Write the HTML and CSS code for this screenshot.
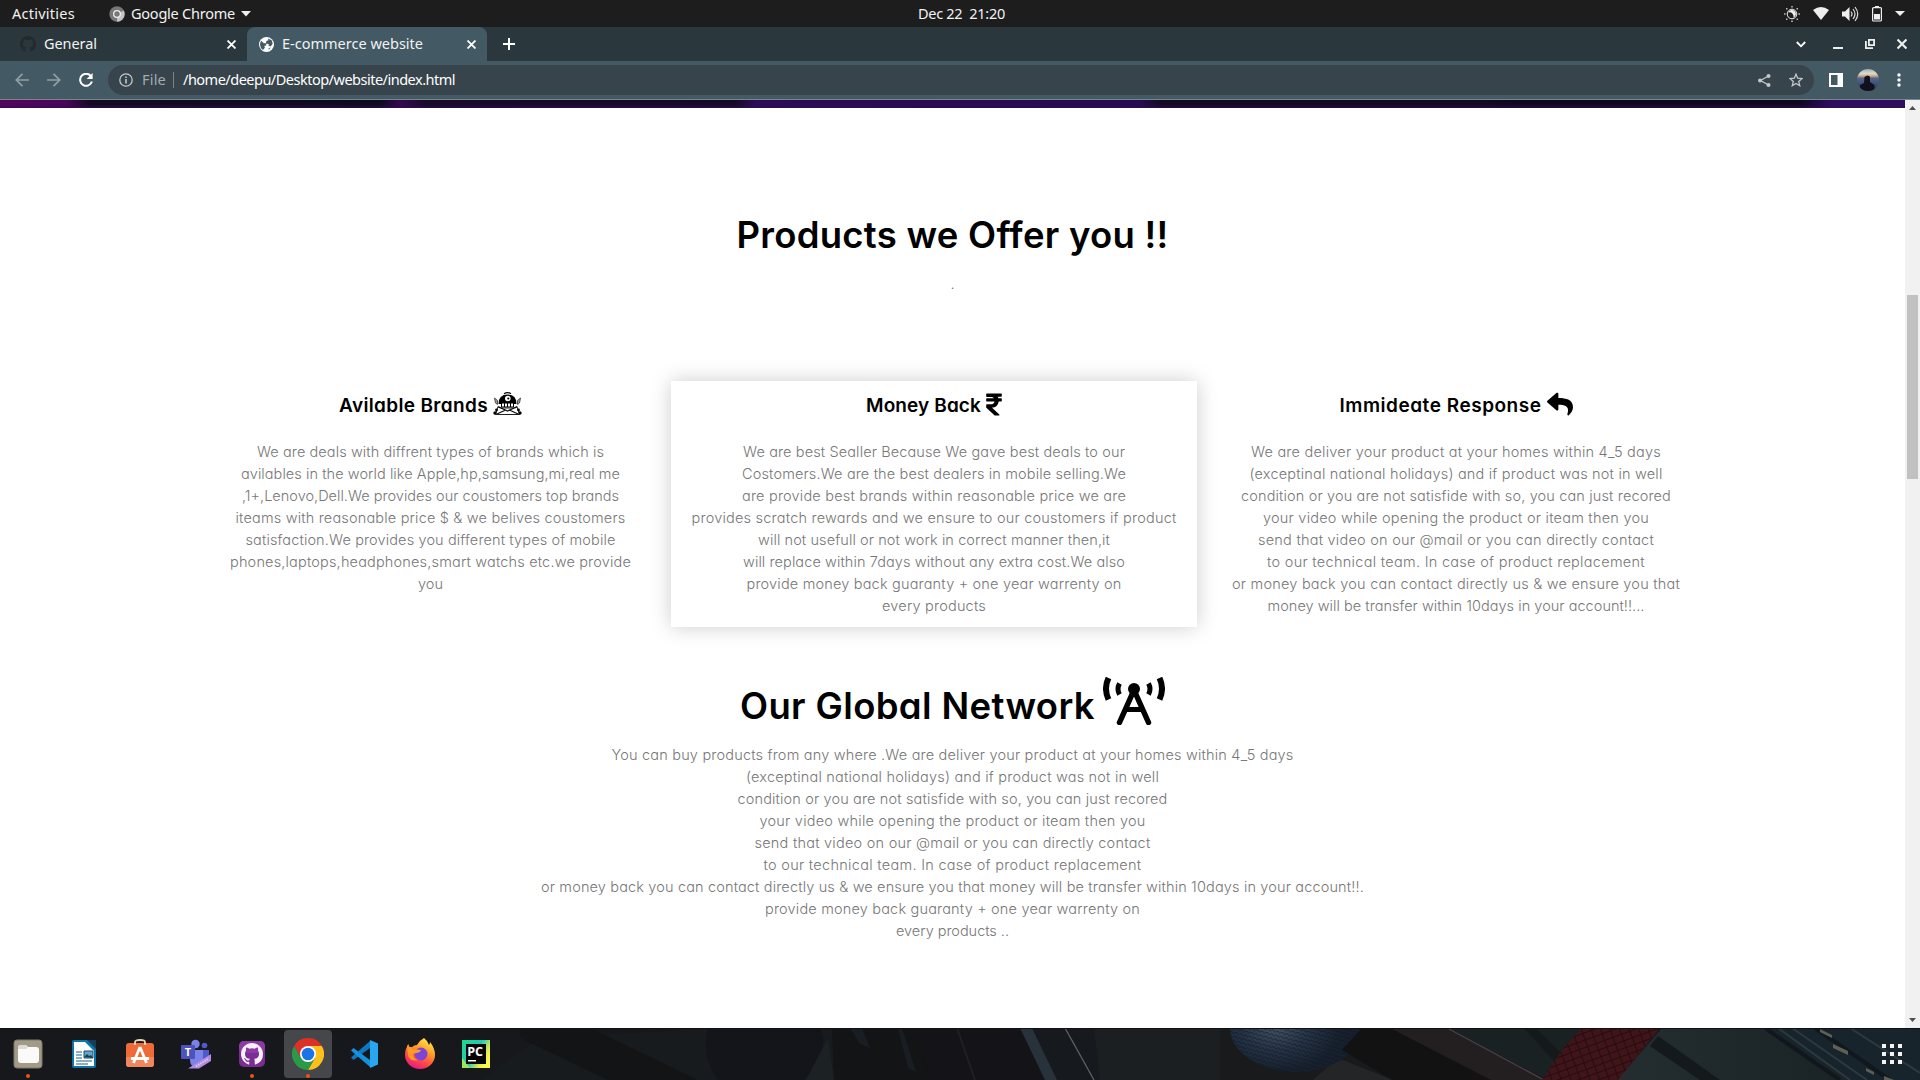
FILE: index.html
```html
<!DOCTYPE html>
<html lang="en">
<head>
<meta charset="utf-8">
<title>E-commerce website</title>
<link rel="stylesheet" href="styles.css">
</head>
<body>
<header class="topbar">
  <span class="activities fit" data-width="63">Activities</span>
  <span class="app-menu">
    <svg width="16" height="16" viewBox="0 0 16 16"><circle cx="8" cy="8" r="7.700" fill="#777"/><path d="M8 8L14.800 4.500A7.700 7.700 0 0 1 8 15.700z" fill="#c4c4c4"/><circle cx="8" cy="8" r="4" fill="#eee"/><circle cx="8" cy="8" r="2.700" fill="#777"/></svg>
    <span class="app-name fit" data-width="104">Google Chrome</span>
    <svg width="10" height="6" viewBox="0 0 10 6"><path d="M0 0h10L5 5.500z" fill="#eee"/></svg>
  </span>
  <span class="clock fit" data-width="87">Dec 22&nbsp; 21:20</span>
  <span class="tray">
    <svg width="16" height="16" viewBox="0 0 16 16" fill="#eee"><circle cx="8" cy="8" r="4.800" fill="none" stroke="#eee"/><path d="M7 4.200a4 4 0 1 0 4.800 5.200A3.800 3.800 0 0 1 7 4.200z" transform="rotate(180 8 8)"/><path d="M7.200 0h1.600v1.600H7.200zM7.200 14.400h1.600V16H7.200zM0 7.200h1.600v1.600H0zM14.400 7.200H16v1.600h-1.600zM2 2h1.500v1.500H2zM12.500 2H14v1.500h-1.500zM2 12.500h1.500V14H2zM12.500 12.500H14V14h-1.500z" opacity=".75"/></svg>
    <svg width="16" height="13" viewBox="0 0 16 13"><path d="M0 3Q8-2.800 16 3L8 13z" fill="#eee"/></svg>
    <svg width="17" height="16" viewBox="0 0 17 16"><path d="M0 5.500h3L7.500 1v14L3 10.500H0z" fill="#eee"/><path d="M9 5.500q2 2.500 0 5M11 3q4 5 0 10M13 1q5.500 7 0 14" fill="none" stroke="#ddd" stroke-width="1.200"/></svg>
    <svg width="10" height="16" viewBox="0 0 10 16"><path d="M3 0h4v1.500H3z" fill="#eee"/><rect x=".6" y="1.600" width="8.800" height="13.400" rx="1" fill="none" stroke="#eee" stroke-width="1.200"/><path d="M2 8h6v5.500H2z" fill="#eee"/></svg>
    <svg width="10" height="5" viewBox="0 0 10 5"><path d="M0 0h10L5 5z" fill="#eee"/></svg>
  </span>
</header>

<nav class="tabs">
  <div class="tab">
    <svg class="tab-icon" width="16" height="16" viewBox="0 0 16 16"><path fill="#24292e" d="M8 0C3.580 0 0 3.580 0 8c0 3.540 2.290 6.530 5.470 7.590.4.070.55-.17.55-.38 0-.19-.01-.82-.01-1.490-2.010.37-2.530-.49-2.690-.94-.09-.23-.48-.94-.82-1.130-.28-.15-.68-.52-.01-.53.63-.01 1.080.58 1.230.82.72 1.210 1.870.87 2.330.66.070-.52.28-.87.51-1.070-1.780-.2-3.640-.89-3.640-3.950 0-.87.31-1.590.82-2.150-.08-.2-.36-1.020.08-2.120 0 0 .67-.21 2.200.82a7.600 7.600 0 0 1 4 0c1.530-1.040 2.200-.82 2.200-.82.44 1.100.16 1.920.08 2.120.51.56.82 1.270.82 2.150 0 3.070-1.870 3.750-3.650 3.950.29.25.54.73.54 1.480 0 1.070-.01 1.930-.01 2.200 0 .21.15.46.55.38A8 8 0 0 0 16 8c0-4.420-3.580-8-8-8z"/></svg>
    <span class="tab-title fit" data-width="53">General</span>
    <svg class="close" width="9" height="9" viewBox="0 0 8 8"><path d="M.5.500l7 7M7.500.500l-7 7" stroke="#fff" stroke-width="1.600"/></svg>
  </div>
  <div class="tab active">
    <svg class="tab-icon" width="15" height="15" viewBox="0 0 14 14"><circle cx="7" cy="7" r="7" fill="#fff"/><path d="M2 3.500l2.500 2.300h2.300v2L5 8.300l.5 1.700-1.800 2.200A7 7 0 0 1 2 3.500zM8.500 1.300l3.300 1.800 1 3-1.800 2.800-2-.8V6.500L6.500 6l.3-2.200L8.800 3zM9 10.500l2-.8-2 2.500z" fill="#435963"/></svg>
    <span class="tab-title fit" data-width="141">E-commerce website</span>
    <svg class="close" width="9" height="9" viewBox="0 0 8 8"><path d="M.5.500l7 7M7.500.500l-7 7" stroke="#fff" stroke-width="1.600"/></svg>
  </div>
  <svg class="new-tab" width="12" height="12" viewBox="0 0 12 12"><path d="M6 0v12M0 6h12" stroke="#fff" stroke-width="2"/></svg>
  <div class="window-buttons">
    <svg width="10" height="7" viewBox="0 0 10 7"><path d="M.8 1L5 5.300 9.200 1" fill="none" stroke="#fff" stroke-width="1.800"/></svg>
    <svg class="minimise" width="10" height="10" viewBox="0 0 10 10"><path d="M0 8h10v2H0z" fill="#eee"/></svg>
    <svg width="10" height="10" viewBox="0 0 10 10"><path d="M3.900.900h5.200v5.200H3.900zM.9 2v7.100H8" fill="none" stroke="#eee" stroke-width="1.800"/></svg>
    <svg width="10" height="10" viewBox="0 0 10 10"><path d="M.5.500l9 9M9.500.500l-9 9" stroke="#eee" stroke-width="2.200"/></svg>
  </div>
</nav>

<div class="toolbar">
  <svg width="14" height="14" viewBox="0 0 14 14"><path d="M14 7H1.500M7.500.800L1.300 7l6.200 6.200" fill="none" stroke="#92a0a6" stroke-width="1.700"/></svg>
  <svg width="14" height="14" viewBox="0 0 14 14"><path d="M0 7h12.500M6.500.800L12.700 7l-6.200 6.200" fill="none" stroke="#92a0a6" stroke-width="1.700"/></svg>
  <svg width="14" height="14" viewBox="0 0 14 14"><path d="M11.800 3A6 6 0 1 0 12.900 8.500" fill="none" stroke="#fff" stroke-width="2"/><path d="M13.600 0v6H7.600z" fill="#fff"/></svg>
  <div class="address">
    <svg width="14" height="14" viewBox="0 0 14 14"><circle cx="7" cy="7" r="6.200" fill="none" stroke="#c3c9cc" stroke-width="1.300"/><path d="M6.200 6h1.600v4.500H6.200zM6.200 3.500h1.600V5H6.200z" fill="#c3c9cc"/></svg>
    <span class="scheme fit" data-width="24">File</span>
    <span class="divider"></span>
    <span class="path fit" data-width="272">/home/deepu/Desktop/website/index.html</span>
    <svg class="share" width="13" height="13" viewBox="0 0 13 13"><path d="M10.500 2L2.500 6.500l8 4.500" fill="none" stroke="#c3c7ca" stroke-width="1.300"/><circle cx="10.500" cy="2" r="2" fill="#c3c7ca"/><circle cx="2" cy="6.500" r="2" fill="#c3c7ca"/><circle cx="10.500" cy="11" r="2" fill="#c3c7ca"/></svg>
    <svg width="14" height="14" viewBox="0 0 14 14"><path d="M7 1.200l1.700 4 4.300.4-3.300 2.900 1 4.200L7 10.500l-3.700 2.200 1-4.200L1 5.600l4.300-.4z" fill="none" stroke="#c3c7ca" stroke-width="1.300"/></svg>
  </div>
  <svg class="panel" width="14" height="14" viewBox="0 0 14 14"><path d="M0 0h14v14H0zM2 2v10h6.500V2z" fill="#fff" fill-rule="evenodd"/></svg>
  <svg class="avatar" width="22" height="22" viewBox="0 0 22 22"><defs><clipPath id="av"><circle cx="11" cy="11" r="11"/></clipPath><linearGradient id="sky" x2="0" y2="1"><stop stop-color="#9dacb9"/><stop offset=".2" stop-color="#dcdccb"/><stop offset=".3" stop-color="#d5b48c"/><stop offset=".42" stop-color="#54658a"/><stop offset="1" stop-color="#26345c"/></linearGradient></defs><g clip-path="url(#av)"><path d="M0 0h22v22H0z" fill="url(#sky)"/><path d="M7.500 8q3.500-3 5.500 0v5l4.500 3v6H3v-6l4-2z" fill="#12101e"/></g></svg>
  <svg width="4" height="14" viewBox="0 0 4 14" fill="#fff"><circle cx="2" cy="2" r="1.700"/><circle cx="2" cy="7" r="1.700"/><circle cx="2" cy="12" r="1.700"/></svg>
</div>

<div class="viewport">
  <main class="page">
    <div class="hero-edge"></div>
    <section class="offer">
      <h1><span class="fit" data-width="432">Products we Offer you !!</span></h1>
      <p class="lead">.</p>
      <div class="cards">
        <article class="card brands">
          <h3><span class="fit" data-width="149">Avilable Brands</span>
            <svg class="pirate" width="29" height="24" viewBox="0 0 29 24"><path d="M5.500 12Q5.500 2.500 14.500 2.500T23.500 12z"/><path d="M11 1.700q3.500-2 7 0" fill="none" stroke="#000" stroke-width="1.200"/><circle cx="14.800" cy="6.500" r="2.800" fill="#fff"/><circle cx="15.300" cy="6.500" r="1.100"/><path d="M8.500 11h12v4h-12z" fill="#fff" stroke="#000"/><path d="M11.500 11v4M14.500 11v4M17.500 11v4" stroke="#000"/><path d="M5 14.500l4 1.500h11l4-1.500 2.500 8h-24z" fill="#fff" stroke="#222"/><path d="M4 22l8.500-4L5 15M25 22l-8.500-4L24 15M9 16.500l5.500 2.500 5.500-2.500" fill="none" stroke="#111" stroke-width="1.200"/><path d="M1.500 6l3 2.500v4L2.500 11zM27.500 6l-3 2.500v4L26.500 11z" fill="#999" stroke="#555"/><circle cx="2" cy="21" r="1.700"/><circle cx="27" cy="21" r="1.700"/><circle cx="3.500" cy="18" r="1.400"/><circle cx="25.500" cy="18" r="1.400"/></svg>
          </h3>
          <p>
            <span class="fit" data-width="347">We are deals with diffrent types of brands which is</span>
            <span class="fit" data-width="379">avilables in the world like Apple,hp,samsung,mi,real me</span>
            <span class="fit" data-width="377">,1+,Lenovo,Dell.We provides our coustomers top brands</span>
            <span class="fit" data-width="390">iteams with reasonable price $ &amp; we belives coustomers</span>
            <span class="fit" data-width="370">satisfaction.We provides you different types of mobile</span>
            <span class="fit" data-width="401">phones,laptops,headphones,smart watchs etc.we provide</span>
            <span class="fit" data-width="25">you</span>
          </p>
        </article>
        <article class="card money">
          <h3><span class="fit" data-width="115">Money Back</span>
            <svg class="rupee" width="16" height="25" viewBox="0 0 320 512"><path d="M308 96c6.627 0 12-5.373 12-12V44c0-6.627-5.373-12-12-12H12C5.373 32 0 37.373 0 44v44.748c0 6.627 5.373 12 12 12h85.280c27.308 0 48.261 9.958 60.970 27.252H12c-6.627 0-12 5.373-12 12v40c0 6.627 5.373 12 12 12h158.757c-6.217 36.086-32.294 58.632-74.757 58.632H12c-6.627 0-12 5.373-12 12v53.012c0 3.349 1.400 6.546 3.861 8.818l165.052 152.356a12.001 12.001 0 0 0 8.139 3.182h82.562c10.924 0 16.166-13.408 8.139-20.818L116.871 319.906c76.499-2.340 131.144-53.395 138.318-127.906H308c6.627 0 12-5.373 12-12v-40c0-6.627-5.373-12-12-12h-58.690c-3.486-11.541-8.280-22.246-14.252-32H308z"/></svg>
          </h3>
          <p>
            <span class="fit" data-width="382">We are best Sealler Because We gave best deals to our</span>
            <span class="fit" data-width="384">Costomers.We are the best dealers in mobile selling.We</span>
            <span class="fit" data-width="384">are provide best brands within reasonable price we are</span>
            <span class="fit" data-width="485">provides scratch rewards and we ensure to our coustomers if product</span>
            <span class="fit" data-width="352">will not usefull or not work in correct manner then,it</span>
            <span class="fit" data-width="382">will replace within 7days without any extra cost.We also</span>
            <span class="fit" data-width="375">provide money back guaranty + one year warrenty on</span>
            <span class="fit" data-width="104">every products</span>
          </p>
        </article>
        <article class="card response">
          <h3><span class="fit" data-width="202">Immideate Response</span>
            <svg class="reply" width="26" height="26" viewBox="0 0 512 512"><path d="M8.309 189.836L184.313 37.851C199.719 24.546 224 35.347 224 56.015v80.053c160.629 1.839 288 34.032 288 186.258 0 61.441-39.581 122.309-83.333 154.132-13.653 9.931-33.111-2.533-28.077-18.631 45.344-145.012-21.507-183.510-176.590-185.742V360c0 20.700-24.300 31.453-39.687 18.164l-176.004-152c-11.071-9.562-11.086-26.753 0-36.328z"/></svg>
          </h3>
          <p>
            <span class="fit" data-width="410">We are deliver your product at your homes within 4_5 days</span>
            <span class="fit" data-width="413">(exceptinal national holidays) and if product was not in well</span>
            <span class="fit" data-width="430">condition or you are not satisfide with so, you can just recored</span>
            <span class="fit" data-width="386">your video while opening the product or iteam then you</span>
            <span class="fit" data-width="396">send that video on our @mail or you can directly contact</span>
            <span class="fit" data-width="378">to our technical team. In case of product replacement</span>
            <span class="fit" data-width="448">or money back you can contact directly us &amp; we ensure you that</span>
            <span class="fit" data-width="377">money will be transfer within 10days in your account!!...</span>
          </p>
        </article>
      </div>
    </section>
    <section class="network">
      <h1><span class="fit" data-width="355">Our Global Network</span>
        <svg class="tower" width="62" height="48" viewBox="0 0 62 48" fill="none" stroke="#000"><path d="M5.500 1Q.500 11.500 5.500 22.500M56.500 1Q61.500 11.500 56.500 22.500" stroke-width="6"/><path d="M16.500 6.500q-3 5.500 0 11M45.500 6.500q3 5.500 0 11" stroke-width="5"/><g stroke-linecap="round"><path d="M31 13L16.500 45.500M31 13l14.500 32.500" stroke-width="5.500"/></g><path d="M23 32.500h16" stroke-width="5"/><circle cx="31" cy="12" r="6" fill="#000" stroke="none"/></svg>
      </h1>
      <p>
        <span class="fit" data-width="682">You can buy products from any where .We are deliver your product at your homes within 4_5 days</span>
        <span class="fit" data-width="413">(exceptinal national holidays) and if product was not in well</span>
        <span class="fit" data-width="430">condition or you are not satisfide with so, you can just recored</span>
        <span class="fit" data-width="386">your video while opening the product or iteam then you</span>
        <span class="fit" data-width="396">send that video on our @mail or you can directly contact</span>
        <span class="fit" data-width="378">to our technical team. In case of product replacement</span>
        <span class="fit" data-width="823">or money back you can contact directly us &amp; we ensure you that money will be transfer within 10days in your account!!.</span>
        <span class="fit" data-width="375">provide money back guaranty + one year warrenty on</span>
        <span class="fit" data-width="113">every products ..</span>
      </p>
    </section>
  </main>
  <aside class="scrollbar">
    <svg width="7" height="4" viewBox="0 0 7 4"><path d="M0 4h7L3.500 0z" fill="#505050"/></svg>
    <div class="track"><div class="thumb"></div></div>
    <svg width="7" height="4" viewBox="0 0 7 4"><path d="M0 0h7L3.500 4z" fill="#505050"/></svg>
  </aside>
</div>

<footer class="dock">
  <svg class="wallpaper" width="1920" height="52" viewBox="0 0 1920 52">
    <defs>
      <radialGradient id="ball" cx=".35" cy=".5"><stop stop-color="#435163"/><stop offset=".5" stop-color="#263446"/><stop offset="1" stop-color="#17202c"/></radialGradient>
      <linearGradient id="slate"><stop stop-color="#242d30"/><stop offset="1" stop-color="#192225"/></linearGradient>
      <pattern id="knit" width="5" height="4" patternUnits="userSpaceOnUse" patternTransform="rotate(15)"><path d="M0 0l2.500 2L5 0" fill="none" stroke="#0b1422" stroke-width="1" opacity=".7"/></pattern>
      <pattern id="scale" width="9" height="7" patternUnits="userSpaceOnUse" patternTransform="rotate(-20)"><path d="M0 0h9M0 0v7" stroke="#1c070a" stroke-width="2"/></pattern>
    </defs>
    <path d="M0 0h1920v52H0z" fill="#16181b"/>
    <path d="M480 52L540 10l180-10h120v52z" fill="#171b1e"/>
    <path d="M520 0h70l108 52h-90L520 10z" fill="#131415"/>
    <path d="M708 0h112q10 20-10 45l-6 7h-86q-18-24-10-52z" fill="#13151a"/>
    <path d="M828 10l6 42h-28z" fill="#1c2224"/>
    <path d="M832 0h88l20 52H834z" fill="#131415"/>
    <path d="M850 0l10 16 10 4-8-20zM898 0l10 40 8 4-14-44z" fill="#181e23"/>
    <path d="M916 0h106l24 52H930z" fill="#131318"/>
    <path d="M957 0l18 52" stroke="#1e2024" stroke-width="2"/>
    <path d="M1033 0h120l67 52h-164z" fill="#161a1f"/>
    <path d="M1094 0h136v52h-130z" fill="#1b1f21"/>
    <path d="M1020 0h12l25 52h-12z" fill="#28323a"/>
    <path d="M1065 0l29 52" stroke="#626467" stroke-width="1.200"/>
    <path d="M1220 0h200v52h-200z" fill="#181a1b"/>
    <path d="M1338 30l55 22h-80z" fill="#232526"/>
    <ellipse cx="1296" cy="0" rx="66" ry="44" fill="url(#ball)"/><ellipse cx="1296" cy="0" rx="66" ry="44" fill="url(#knit)"/>
    <path d="M1362 0h40l140 52h-150l-50-30z" fill="#121213"/>
    <path d="M1390 0h58l98 52h-55z" fill="#231e20"/>
    <path d="M1444 0h140l-36 52z" fill="#1a2123"/>
    <path d="M1524 0h12l30 30-6 10z" fill="#14191c"/>
    <path d="M1447 0l97 52" stroke="#4b4244" stroke-width="1.200"/>
    <path d="M1662 0h120l80 52h-245z" fill="url(#slate)"/>
    <path d="M1658 8l62 44h-20l-50-34z" fill="#14191c"/>
    <path d="M1582 0h78l-42 52h-76l20-30z" fill="#3f1519"/><path d="M1582 0h78l-42 52h-76l20-30z" fill="url(#scale)" opacity=".7"/>
    <path d="M1765 0h155v52h-70z" fill="#18242c"/>
    <path d="M1778 0l72 52M1792 0l75 52M1850 0l70 45" stroke="#2c393f" stroke-width="2"/>
    <path d="M1765 0l75 52M1815 0l75 52" stroke="#10181d" stroke-width="4"/>
    <path d="M1820 1l12 6v3l-12-6zM1833 16l15 7v4l-15-7zM1866 40l8 4v3l-8-4zM1884 48l10 4h-10z" fill="#5f5f56"/>
    <path d="M0 .5h1920" stroke="#101214"/>
  </svg>
  <div class="apps">
    <div class="app running"><svg width="30" height="30" viewBox="0 0 30 30"><rect x="1" y="1" width="28" height="28" rx="3" fill="#a29b88" stroke="#7e7868"/><path d="M5 9q0-3 3-3h5l2 2h8q3 0 3 3v10q0 3-3 3H8q-3 0-3-3z" fill="#fafaf8"/><path d="M5 9q0-3 3-3h5l2 2-1.500 2H5z" fill="#dedbd2"/></svg></div>
    <div class="app"><svg width="30" height="30" viewBox="0 0 30 30"><path d="M5 1h14l8 8v18q0 2-2 2H5q-2 0-2-2V3q0-2 2-2z" fill="#0e73a8"/><path d="M5 3h11l9 9v15H5z" fill="#fff"/><path d="M18 1h9v9z" fill="#123e5a"/><path d="M7 13h6M7 16h6M7 19h6M7 22h16M7 25h12" stroke="#1a6287" stroke-width="1.200"/><path d="M15 12h9v7h-9z" fill="#67a5c8" stroke="#174e70"/><path d="M15 18l3-3 2 2 2-1 2 3z" fill="#173f58"/></svg></div>
    <div class="app"><svg width="30" height="30" viewBox="0 0 30 30"><rect x="1" y="4" width="28" height="24" rx="3" fill="#ee6a37"/><path d="M1 18h28v7q0 3-3 3H4q-3 0-3-3z" fill="#f1855c"/><path d="M10 6V3q0-2 5-2t5 2v3" fill="none" stroke="#ecd9b1" stroke-width="1.800"/><path d="M15 8L8.500 24M15 8l6.500 16M6 19.500h18" fill="none" stroke="#fff" stroke-width="2.800"/></svg></div>
    <div class="app"><svg width="30" height="30" viewBox="0 0 30 30"><circle cx="14.500" cy="5" r="4.200" fill="#7b83eb"/><circle cx="23.500" cy="6.500" r="2.800" fill="#5059c9"/><path d="M19 11h9v9q-1 5-6 5z" fill="#5059c9"/><path d="M9 11h13v10q-1 7-7 7t-6-7z" fill="#7b83eb"/><rect y="6" width="14" height="14" rx="1" fill="#4b53bc"/><text class="teams-letter" x="7" y="17">T</text><path d="M7 29.500L30 15v7L18 29.500z" fill="#b18be0"/><path d="M15 27.500l12-7.500" stroke="#ddc8f2" stroke-width="2" stroke-dasharray="1.500 1"/></svg></div>
    <div class="app running"><svg width="28" height="28" viewBox="0 0 28 28"><rect x="1" y="1" width="26" height="26" rx="5" fill="#7a2d92"/><rect x="1" y="1" width="26" height="12" rx="5" fill="#8e3aa6"/><path transform="translate(3 3) scale(1.375)" fill="#f6f0f8" d="M8 0C3.580 0 0 3.580 0 8c0 3.540 2.290 6.530 5.470 7.590.4.070.55-.17.55-.38 0-.19-.01-.82-.01-1.490-2.010.37-2.530-.49-2.690-.94-.09-.23-.48-.94-.82-1.130-.28-.15-.68-.52-.01-.53.63-.01 1.080.58 1.230.82.72 1.210 1.870.87 2.330.66.070-.52.28-.87.51-1.070-1.780-.2-3.640-.89-3.640-3.950 0-.87.31-1.590.82-2.150-.08-.2-.36-1.020.08-2.120 0 0 .67-.21 2.200.82a7.600 7.600 0 0 1 4 0c1.530-1.040 2.200-.82 2.200-.82.44 1.100.16 1.920.08 2.120.51.56.82 1.270.82 2.150 0 3.070-1.870 3.750-3.650 3.950.29.25.54.73.54 1.480 0 1.070-.01 1.930-.01 2.200 0 .21.15.46.55.38A8 8 0 0 0 16 8c0-4.420-3.580-8-8-8z"/></svg></div>
    <div class="app running focused"><svg width="32" height="32" viewBox="0 0 32 32"><path d="M16 8h13.860A16 16 0 0 0 2.140 8l6.930 12z" fill="#dd3126"/><path d="M22.930 20L16 32A16 16 0 0 0 29.860 8H16z" fill="#fbc01a"/><path d="M9.070 20L2.140 8A16 16 0 0 0 16 32l6.930-12z" fill="#2a9a49"/><circle cx="16" cy="16" r="8" fill="#fff"/><circle cx="16" cy="16" r="6.300" fill="#1a73e8"/></svg></div>
    <div class="app"><svg width="28" height="28" viewBox="0 0 28 28"><path d="M20 1L1 17.500l2.500 2.500L20 8z" fill="#0a78c2"/><path d="M20 27L1 10.500 3.500 8 20 20z" fill="#1590dc"/><path d="M20 0l8 3.500v21L20 28z" fill="#29a6f2"/></svg></div>
    <div class="app"><svg width="32" height="32" viewBox="0 0 32 32"><defs><linearGradient id="fire" x1=".8" y1="0" x2=".3" y2="1"><stop stop-color="#fff14d"/><stop offset=".4" stop-color="#ff9a26"/><stop offset=".7" stop-color="#ff4a45"/><stop offset="1" stop-color="#e3178a"/></linearGradient></defs><path d="M20 0q4 3 5 7 1-1 1-3 5 6 5 13a15 14 0 0 1-30 0q0-7 4-11v3l3 0q2-2 5-2 3-5 7-7z" fill="url(#fire)"/><circle cx="17" cy="16" r="6.500" fill="#7a45d8"/><path d="M3 7l6 4 8 1q-1 3-5 3l-3 1q0 5 5 6-7 2-10-4z" fill="#ff9a26"/></svg></div>
    <div class="app"><svg width="28" height="28" viewBox="0 0 28 28"><defs><linearGradient id="pc" y2=".6"><stop stop-color="#21d789"/><stop offset=".55" stop-color="#22c9b5"/><stop offset=".85" stop-color="#e4ee4a"/><stop offset="1" stop-color="#fcf84a"/></linearGradient></defs><path d="M0 0h28v28H0z" fill="url(#pc)"/><path d="M0 18l8 10H0z" fill="#9be85a"/><path d="M4 4h20v20H4z" fill="#050505"/><text class="pc-letters" x="5.200" y="15.500">PC</text><path d="M6 20h8v1.500H6z" fill="#fff"/></svg></div>
  </div>
  <svg class="app-grid" width="21" height="20" viewBox="0 0 21 20" fill="#f4f4f4"><path d="M0 0h4v4H0zM8 0h4v4H8zM16 0h4v4h-4zM0 8h4v4H0zM8 8h4v4H8zM16 8h4v4h-4zM0 16h4v4H0zM8 16h4v4H8zM16 16h4v4h-4z"/></svg>
</footer>
<script src="fit.js"></script>
</body>
</html>
```
FILE: fit.js
```js
// Tracks each line of copy out (or in) to the measure given in data-width.
document.querySelectorAll('.fit').forEach(function (line) {
  var natural = line.getBoundingClientRect().width;
  var spacing = (Number(line.dataset.width) - natural) / line.textContent.length;
  line.style.letterSpacing = spacing + 'px';
});
```
FILE: styles.css
```css
* { box-sizing: border-box; }
svg { display: block; flex: none; }
body {
  margin: 0;
  width: 1920px;
  height: 1080px;
  overflow: hidden;
  display: flex;
  flex-direction: column;
  font-family: "Noto Sans", "Open Sans", sans-serif;
  font-size: 14.5px;
  line-height: 20px;
  color: #f2f2f2;
  background: #fff;
}
.fit { display: inline-block; flex: none; white-space: nowrap; }

/* Desktop bar */
.topbar {
  display: grid;
  grid-template-columns: 1fr auto 1fr;
  height: 27px;
  flex: none;
  align-items: center;
  padding: 0 15px 0 12px;
  background: #1d1d1d;
}
.topbar { display: flex; }
.app-menu { display: flex; align-items: center; gap: 6px; margin-left: 34px; }
.topbar .fit { padding-bottom: 1px; }
.clock { margin-left: 667px; }
.tray { display: flex; align-items: center; gap: 13px; margin-left: auto; }

/* Browser tabs */
.tabs { display: flex; height: 34px; flex: none; align-items: center; background: #2a383e; }
.tab { display: flex; align-items: center; width: 247px; height: 34px; padding: 0 11px 0 20px; gap: 8px; }
.tab.active { width: 240px; padding-left: 12px; background: #435963; border-radius: 8px 8px 0 0; }
.tab-title { padding-bottom: 2px; }
.close { margin-left: auto; }
.new-tab { margin-left: 16px; }
.window-buttons { display: flex; align-items: center; gap: 22px; margin: 0 13px 0 auto; }
.minimise { margin-left: 5px; }

/* Browser toolbar */
.toolbar {
  display: flex;
  height: 39px;
  flex: none;
  align-items: center;
  gap: 18px;
  padding: 0 19px 0 15px;
  background: #435963;
  border-bottom: 1px solid #78878e;
}
.address {
  display: flex;
  align-items: center;
  flex: 1;
  height: 30px;
  margin: 0 -3px;
  padding: 0 11px;
  border-radius: 15px;
  background: #37444c;
}
.address .fit { padding-bottom: 2px; }
.scheme { margin-left: 9px; color: #a3acb0; }
.divider { width: 1px; height: 16px; background: #7b868b; margin: 0 9px 0 7px; }
.path { color: #fff; }
.share { margin: 0 18px 0 auto; }
.panel { margin-right: -4px; }

/* Web page */
.viewport { display: flex; height: 928px; flex: none; }
.page {
  flex: 1;
  background: #fff;
  color: #000;
  font-family: Inter, sans-serif;
  font-feature-settings: "cv11";
  text-align: center;
  overflow: hidden;
}
.hero-edge {
  height: 8px;
  background:
    linear-gradient(#0000 50%, #2d0b5aaa),
    linear-gradient(90deg, #55045c 0, #4b0658 65px, #130a20 90px, #0d0a1e 380px, #35084f 400px, #180a28 425px, #150a25 735px, #2b0c55 755px, #260b50 1140px, #120a22 1160px, #120a22 1480px, #0e0720 1510px, #0e0720 1800px, #2d0e5e 1830px, #2d0e5e 100%);
}
.page h1, .page h3, .page p { margin: 0; }
.page h1 { font-size: 36.5px; font-weight: 600; line-height: 54px; }
.page h3 { display: flex; justify-content: center; align-items: center; font-size: 19px; font-weight: 600; line-height: 28px; }
.page p { font-size: 14.5px; font-weight: 300; line-height: 22px; color: #777; }
.page p .fit { display: block; width: max-content; margin-inline: auto; }
.offer { padding-top: 100px; }
.offer .lead { padding-top: 11px; }
.cards { display: flex; margin: 86px 0 0 190px; height: 246px; }
.card { flex: none; padding-top: 11px; }
.card h3 { gap: 5px; margin-bottom: 21px; }
.card h3 svg { margin-top: -4px; }
.brands { width: 481px; }
.money { width: 526px; box-shadow: 0 0 20px rgba(0, 0, 0, .2); }
.response { width: 518px; }
.network { padding-top: 52px; }
.network h1 { display: flex; justify-content: center; align-items: center; gap: 8px; }
.tower { margin-top: -11px; }
.network p { padding-top: 11px; }

.scrollbar { display: flex; flex-direction: column; align-items: center; width: 15px; padding: 6px 0; background: #f1f1f1; }
.track { flex: 1; width: 11px; padding-top: 185px; }
.thumb { height: 184px; background: #c1c1c1; }

/* Dock */
.dock { position: relative; display: flex; align-items: center; justify-content: space-between; height: 52px; flex: none; padding: 0 17px 0 4px; }
.wallpaper { position: absolute; inset: 0; }
.apps { position: relative; display: flex; gap: 8px; }
.app { position: relative; display: flex; align-items: center; justify-content: center; width: 48px; height: 48px; border-radius: 4px; }
.focused { background: #46474a; }
.running::after { content: ""; position: absolute; left: 22px; bottom: 0; width: 4px; height: 4px; border-radius: 50%; background: #e95420; }
.app-grid { position: relative; }
.teams-letter { font: bold 11px "Open Sans", sans-serif; fill: #fff; text-anchor: middle; }
.pc-letters { font: bold 12.5px "Open Sans", sans-serif; fill: #fff; }
```
